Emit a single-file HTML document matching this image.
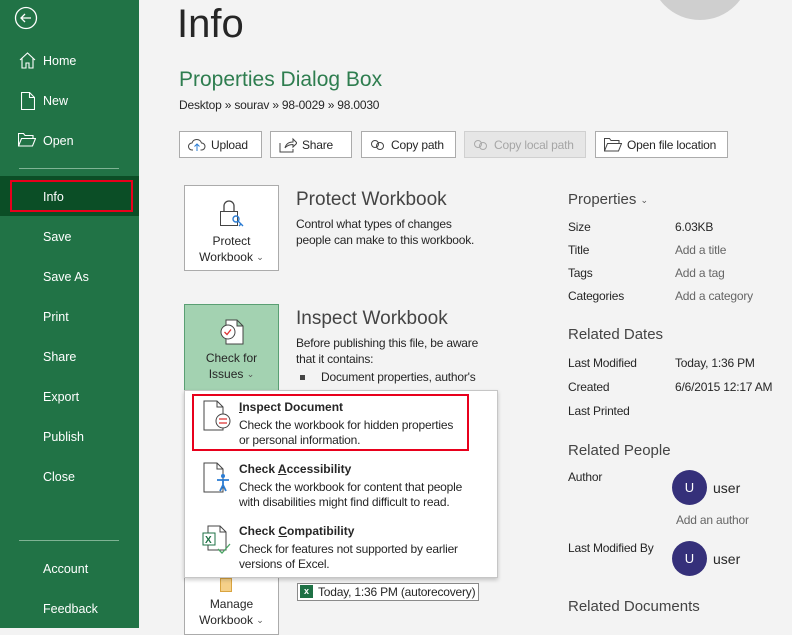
<!DOCTYPE html>
<html><head><meta charset="utf-8"><style>
*{margin:0;padding:0;box-sizing:border-box}
body{width:792px;height:628px;overflow:hidden;background:#f3f3f3;font-family:"Liberation Sans",sans-serif;position:relative;color:#262626}
.a{position:absolute;white-space:nowrap}
#side{position:absolute;left:0;top:0;width:139px;height:628px;background:#217346}
.si{position:absolute;left:43px;color:#fff;font-size:12.5px;transform:translateY(-50%)}
.btn{position:absolute;top:131px;height:27px;border:1px solid #ababab;background:#fff;font-size:12px;letter-spacing:-.2px;display:flex;align-items:center;padding-left:8px;gap:5px;color:#262626}
.t{font-size:12px;color:#262626;letter-spacing:-.2px}
.g{color:#666}
.h{font-size:15px;color:#444}
.cv{font-size:9px;color:#555;vertical-align:1px}
.av{position:absolute;width:35px;height:35px;border-radius:50%;background:#35307a;color:#fff;font-size:13px;text-align:center;line-height:35px}
</style></head><body>
<div id="side">
<svg class="a" style="left:14px;top:6px" width="24" height="24"><circle cx="12" cy="12" r="10.5" fill="none" stroke="#fff" stroke-width="1.3"/><path d="M17 12H7M11 8l-4 4 4 4" fill="none" stroke="#fff" stroke-width="1.3"/></svg>
<svg class="a" style="left:19px;top:52px" width="17" height="17"><path d="M1 8L8.5 1 16 8M3 6v10h4v-5h3v5h4V6" fill="none" stroke="#fff" stroke-width="1.1"/></svg>
<div class="si" style="top:61px">Home</div>
<svg class="a" style="left:21px;top:92px" width="14" height="18"><path d="M.5.5h8l5 5v12H.5z M8.5.5v5h5" fill="none" stroke="#fff" stroke-width="1.1"/></svg>
<div class="si" style="top:101px">New</div>
<svg class="a" style="left:18px;top:133px" width="18" height="14"><path d="M.5 13V.5h5l1.5 2h8v3 M.5 13l3-7.5h14l-3 7.5z" fill="none" stroke="#fff" stroke-width="1.1"/></svg>
<div class="si" style="top:141px">Open</div>
<div class="a" style="left:19px;top:168px;width:100px;height:1px;background:#7fb394"></div>
<div class="a" style="left:0;top:176px;width:139px;height:40px;background:#0b4e26"></div>
<div class="a" style="left:10px;top:180px;width:123px;height:32px;border:2px solid #e8001c"></div>
<div class="si" style="top:197px">Info</div>
<div class="si" style="top:237px">Save</div>
<div class="si" style="top:277px">Save As</div>
<div class="si" style="top:317px">Print</div>
<div class="si" style="top:357px">Share</div>
<div class="si" style="top:397px">Export</div>
<div class="si" style="top:437px">Publish</div>
<div class="si" style="top:477px">Close</div>
<div class="a" style="left:19px;top:540px;width:100px;height:1px;background:#7fb394"></div>
<div class="si" style="top:569px">Account</div>
<div class="si" style="top:609px">Feedback</div>
</div>
<div class="a" style="left:650px;top:-80px;width:100px;height:100px;border-radius:50%;background:#cfcfcf"></div>
<div class="a" style="left:177px;top:2px;font-size:40px;color:#262626;font-weight:300">Info</div>
<div class="a" style="left:179px;top:68px;font-size:21px;color:#2e7d4f">Properties Dialog Box</div>
<div class="a t" style="left:179px;top:98px">Desktop » sourav » 98-0029 » 98.0030</div>
<div class="btn" style="left:179px;width:83px"><svg width="18" height="14"><path d="M5 12H4a3.5 3.5 0 010-7 5 5 0 019.5 0 3.5 3.5 0 010 7h-1" fill="none" stroke="#444"/><path d="M9 13V6M6.5 8.5L9 6l2.5 2.5" fill="none" stroke="#2b7cd3"/></svg>Upload</div>
<div class="btn" style="left:270px;width:82px"><svg width="18" height="16"><path d="M1 6v9h13v-3M6 11c1-4 4-6 8-6V2l4 4-4 4V7.5c-3 0-6 1-8 3.5z" fill="none" stroke="#444"/></svg>Share</div>
<div class="btn" style="left:361px;width:95px"><svg width="16" height="12"><circle cx="5" cy="5" r="3.5" fill="none" stroke="#444"/><circle cx="10" cy="7" r="3.5" fill="none" stroke="#444"/></svg>Copy path</div>
<div class="btn" style="left:464px;width:122px;background:#e6e6e6;border-color:#d0d0d0;color:#a6a6a6"><svg width="16" height="12"><circle cx="5" cy="5" r="3.5" fill="none" stroke="#aaa"/><circle cx="10" cy="7" r="3.5" fill="none" stroke="#aaa"/></svg>Copy local path</div>
<div class="btn" style="left:595px;width:133px"><svg width="18" height="14"><path d="M.5 13V.5h5l1.5 2h8v3 M.5 13l3-7.5h14l-3 7.5z" fill="none" stroke="#444"/></svg>Open file location</div>

<div class="a" style="left:184px;top:185px;width:95px;height:86px;background:#fff;border:1px solid #ababab;text-align:center;font-size:12px;padding-top:14px">
<svg width="30" height="30"><path d="M7 11V6a5 5 0 0110 0v5" fill="none" stroke="#444" stroke-width="1.3"/><rect x="3.5" y="11.5" width="17" height="14" fill="#fff" stroke="#444"/><circle cx="19" cy="19" r="3" fill="none" stroke="#2b7cd3" stroke-width="1.4"/><path d="M21 21l5 5M24 24l-2 2" stroke="#2b7cd3" stroke-width="1.4"/></svg>
<div style="line-height:16px">Protect<br>Workbook <span class="cv">⌄</span></div></div>
<div class="a" style="left:296px;top:189px;font-size:19px;color:#444">Protect Workbook</div>
<div class="a t" style="left:296px;top:216px;line-height:16px">Control what types of changes<br>people can make to this workbook.</div>

<div class="a" style="left:184px;top:304px;width:95px;height:87px;background:#a3d2b1;border:1px solid #5a9f73;text-align:center;font-size:12px;padding-top:12px">
<svg width="30" height="30"><path d="M9 3h11l6 6v18H9z M20 3v6h6" fill="#fff" stroke="#444"/><circle cx="11" cy="15" r="7" fill="#fff" stroke="#444"/><path d="M7.5 15l2.5 2.5 4-5" fill="none" stroke="#d33" stroke-width="1.3"/></svg>
<div style="line-height:16px">Check for<br>Issues <span class="cv">⌄</span></div></div>
<div class="a" style="left:296px;top:308px;font-size:19px;color:#444">Inspect Workbook</div>
<div class="a t" style="left:296px;top:335px;line-height:16px">Before publishing this file, be aware<br>that it contains:</div>
<div class="a" style="left:300px;top:375px;width:5px;height:5px;background:#444"></div>
<div class="a t" style="left:321px;top:370px">Document properties, author's</div>

<div class="a" style="left:184px;top:575px;width:95px;height:60px;background:#fff;border:1px solid #ababab;text-align:center;font-size:12px;padding-top:20px;line-height:16px">Manage<br>Workbook <span class="cv">⌄</span></div>
<div class="a" style="left:220px;top:578px;width:12px;height:14px;background:#f5d089;border:1px solid #d9a440"></div>
<div class="a t" style="left:297px;top:583px;width:182px;height:18px;border:1px solid #8a8a8a;background:#fff;padding-left:20px;line-height:16px">Today, 1:36 PM (autorecovery)</div>
<div class="a" style="left:300px;top:585px;width:13px;height:13px;background:#1e7145;color:#fff;font-size:9px;text-align:center;line-height:13px;font-weight:bold">x</div>

<div class="a" style="left:184px;top:390px;width:314px;height:188px;background:#fff;border:1px solid #c6c6c6;box-shadow:0 2px 4px rgba(0,0,0,.2)"></div>
<div class="a" style="left:192px;top:394px;width:277px;height:57px;border:2px solid #e8001c"></div>
<svg class="a" style="left:203px;top:400px" width="30" height="32"><path d="M1 1h13l6 6v23H1z M14 1v6h6" fill="#fff" stroke="#444"/><circle cx="20" cy="21" r="7" fill="#fff" stroke="#444"/><path d="M16 19h8M16 23h8" stroke="#d33" stroke-width="1.2"/></svg>
<div class="a" style="left:239px;top:400px;font-size:12px;font-weight:bold;color:#262626"><u>I</u>nspect Document</div>
<div class="a t" style="left:239px;top:418px;line-height:15px">Check the workbook for hidden properties<br>or personal information.</div>
<svg class="a" style="left:203px;top:462px" width="30" height="32"><path d="M1 1h13l6 6v23H1z M14 1v6h6" fill="#fff" stroke="#444"/><circle cx="20" cy="14" r="2" fill="#2b7cd3"/><path d="M14 18h12M20 17v6l-3 6M20 23l3 6" fill="none" stroke="#2b7cd3" stroke-width="1.8"/></svg>
<div class="a" style="left:239px;top:462px;font-size:12px;font-weight:bold">Check <u>A</u>ccessibility</div>
<div class="a t" style="left:239px;top:480px;line-height:15px">Check the workbook for content that people<br>with disabilities might find difficult to read.</div>
<svg class="a" style="left:202px;top:525px" width="32" height="32"><path d="M6 1h12l6 6v18H6z M18 1v6h6" fill="#fff" stroke="#444"/><rect x="1" y="8" width="12" height="12" fill="#fff" stroke="#1e7145"/><text x="3" y="18" font-size="10" font-weight="bold" fill="#1e7145" font-family="Liberation Sans">X</text><path d="M16 24l4 4 8-9" fill="none" stroke="#4aa564" stroke-width="1.3"/></svg>
<div class="a" style="left:239px;top:524px;font-size:12px;font-weight:bold">Check <u>C</u>ompatibility</div>
<div class="a t" style="left:239px;top:542px;line-height:15px">Check for features not supported by earlier<br>versions of Excel.</div>

<div class="a h" style="left:568px;top:191px">Properties <span class="cv">⌄</span></div>
<div class="a t" style="left:568px;top:220px">Size</div><div class="a t" style="left:675px;top:220px">6.03KB</div>
<div class="a t" style="left:568px;top:243px">Title</div><div class="a t g" style="left:675px;top:243px">Add a title</div>
<div class="a t" style="left:568px;top:266px">Tags</div><div class="a t g" style="left:675px;top:266px">Add a tag</div>
<div class="a t" style="left:568px;top:289px">Categories</div><div class="a t g" style="left:675px;top:289px">Add a category</div>
<div class="a h" style="left:568px;top:326px">Related Dates</div>
<div class="a t" style="left:568px;top:356px">Last Modified</div><div class="a t" style="left:675px;top:356px">Today, 1:36 PM</div>
<div class="a t" style="left:568px;top:380px">Created</div><div class="a t" style="left:675px;top:380px">6/6/2015 12:17 AM</div>
<div class="a t" style="left:568px;top:404px">Last Printed</div>
<div class="a h" style="left:568px;top:442px">Related People</div>
<div class="a t" style="left:568px;top:470px">Author</div>
<div class="av" style="left:672px;top:470px">U</div><div class="a" style="left:713px;top:480px;font-size:14px">user</div>
<div class="a t g" style="left:676px;top:513px">Add an author</div>
<div class="a t" style="left:568px;top:541px">Last Modified By</div>
<div class="av" style="left:672px;top:541px">U</div><div class="a" style="left:713px;top:551px;font-size:14px">user</div>
<div class="a h" style="left:568px;top:598px">Related Documents</div>
</body></html>
